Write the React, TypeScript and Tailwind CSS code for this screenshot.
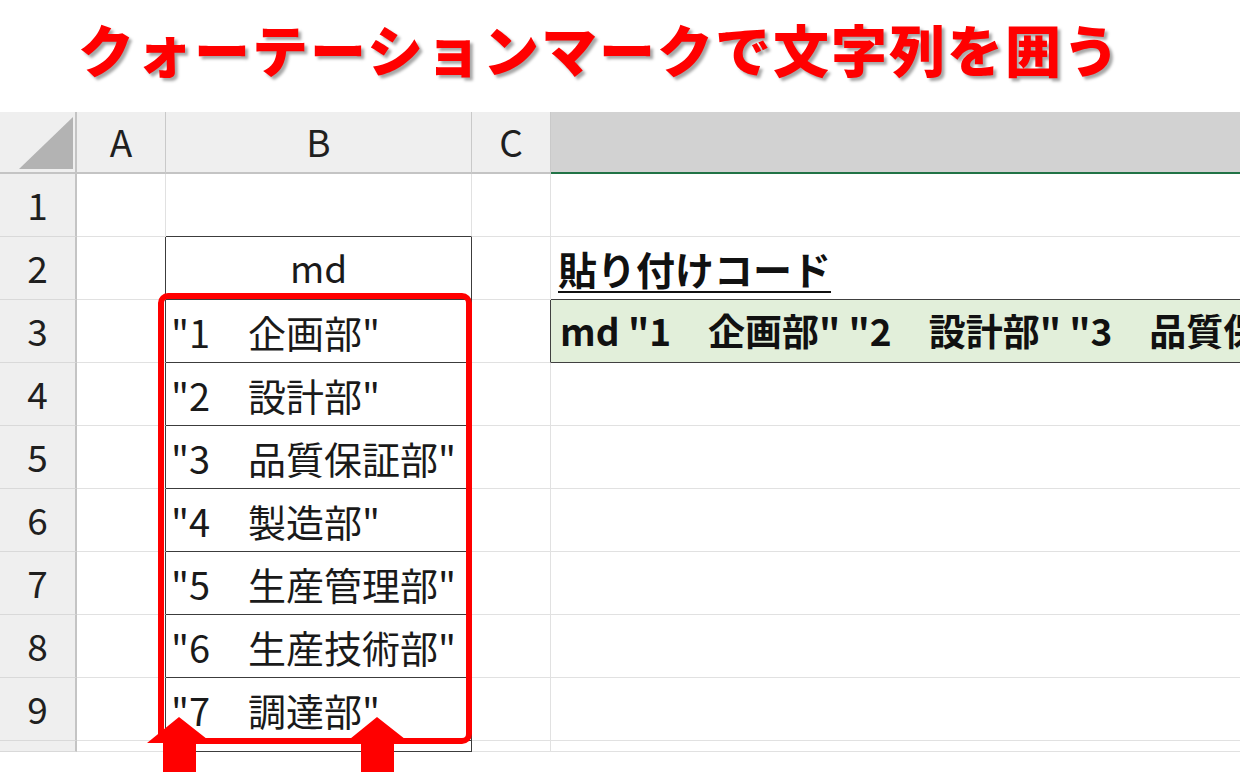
import React from 'react';

const FONT = "font-['Noto_Sans_CJK_JP','Noto_Sans',sans-serif]";

const depts = ['企画部', '設計部', '品質保証部', '製造部', '生産管理部', '生産技術部', '調達部'];

const pasteCode = 'md ' + depts.map((d, i) => `"${i + 1}\u3000${d}"`).join(' ');

function ColumnHeader() {
  return (
    <div className="flex h-[62px] bg-[#efefef]">
      <div className="w-[77px] h-full border-r-2 border-b-2 border-[#c4c4c4] relative shrink-0">
        <svg width="77" height="60" className="absolute left-0 top-0">
          <polygon points="19,57 73,57 73,5" fill="#b3b3b3" />
        </svg>
      </div>
      <div className="w-[89px] shrink-0 flex items-center justify-center border-r border-b-2 border-r-[#c9c9c9] border-b-[#c4c4c4] text-[37px] text-[#1f1f1f]">
        A
      </div>
      <div className="w-[306px] shrink-0 flex items-center justify-center border-r border-b-2 border-r-[#c9c9c9] border-b-[#c4c4c4] text-[37px] text-[#1f1f1f]">
        B
      </div>
      <div className="w-[79px] shrink-0 flex items-center justify-center border-r border-b-2 border-r-[#c9c9c9] border-b-[#c4c4c4] text-[37px] text-[#1f1f1f]">
        C
      </div>
      <div className="flex-1 bg-[#d2d2d2] border-b-2 border-b-[#217346]" />
    </div>
  );
}

function Row({ n, h = 'h-[63px]' }: { n: number; h?: string }) {
  const inTable = n >= 2;
  const bText = n === 2 ? 'md' : n >= 3 && n <= 9 ? `"${n - 2}\u3000${depts[n - 3]}"` : '';
  return (
    <div className={`flex ${h}`}>
      <div className="w-[77px] shrink-0 bg-[#efefef] border-r-2 border-b border-r-[#c4c4c4] border-b-[#d9d9d9] flex items-center justify-center text-[37px] text-[#1f1f1f]">
        {n <= 9 ? n : ''}
      </div>
      <div
        className={
          inTable
            ? 'w-[89px] shrink-0 border-r border-b border-r-[#3c3c3c] border-b-[#e1e1e1]'
            : 'w-[89px] shrink-0 border-r border-b border-[#e1e1e1]'
        }
      />
      <div
        className={
          n === 2
            ? 'w-[306px] shrink-0 border-r border-b border-[#3c3c3c] flex items-center justify-center text-[37px] text-[#1a1a1a]'
            : n >= 2
            ? 'w-[306px] shrink-0 border-r border-b border-[#3c3c3c] flex items-center pl-[5px] whitespace-pre text-[38px] text-[#1a1a1a]'
            : 'w-[306px] shrink-0 border-r border-b border-r-[#e1e1e1] border-b-[#3c3c3c]'
        }
      >
        {bText}
      </div>
      <div
        className={
          n === 3
            ? 'w-[79px] shrink-0 border-r border-b border-r-[#404040] border-b-[#e1e1e1]'
            : 'w-[79px] shrink-0 border-r border-b border-[#e1e1e1]'
        }
      />
      {n === 2 ? (
        <div className="flex-1 min-w-0 border-b border-b-[#404040] flex items-center pl-[7px]">
          <span className="text-[39px] font-bold text-[#111] underline decoration-2 underline-offset-[6px]">貼り付けコード</span>
        </div>
      ) : n === 3 ? (
        <div className="flex-1 min-w-0 bg-[#e2efda] border-b border-b-[#404040] flex items-center pl-[9px] overflow-hidden whitespace-pre text-[37px] font-bold text-[#111]">
          {pasteCode}
        </div>
      ) : (
        <div className="flex-1 min-w-0 border-b border-[#e1e1e1]" />
      )}
    </div>
  );
}

function UpArrow({ x }: { x: number }) {
  return (
    <polygon
      points={`${x},0 ${x + 33},26 ${x + 17},26 ${x + 17},55 ${x - 16},55 ${x - 16},26 ${x - 32},26`}
      fill="#ff0000"
    />
  );
}

export default function App() {
  return (
    <div className={`w-[1240px] h-[772px] bg-white relative overflow-hidden ${FONT}`}>
      <div className="h-[112px] pl-[78px] pt-[18px]">
        <h1 className="text-[56px] leading-[60px] font-black text-[#ff0000] tracking-[2px] [text-shadow:3px_3px_3px_rgba(0,0,0,0.35)]">
          クォーテーションマークで文字列を囲う
        </h1>
      </div>

      <div className="flex flex-col">
        <ColumnHeader />
        {[1, 2, 3, 4, 5, 6, 7, 8, 9].map((n) => (
          <Row key={n} n={n} />
        ))}
        <Row n={10} h="h-[11px]" />
      </div>

      {/* red frame around B3:B9 */}
      <div className="absolute left-[158px] top-[293px] w-[314px] h-[451px] border-[6px] border-[#ff0000] rounded-[10px]" />

      <svg width="1240" height="55" className="absolute left-0 top-[717px]">
        <UpArrow x={179} />
        <UpArrow x={377} />
      </svg>
    </div>
  );
}
